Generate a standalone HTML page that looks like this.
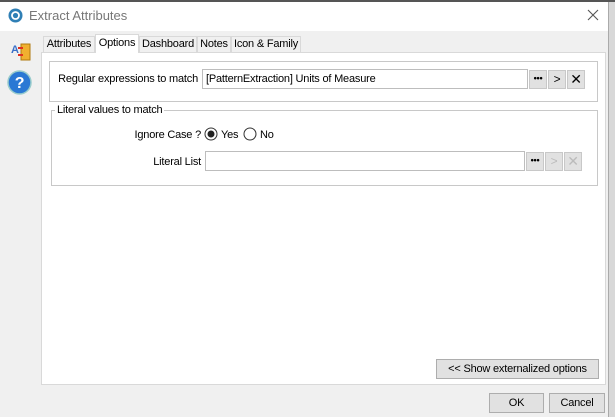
<!DOCTYPE html><html><head><style>
*{box-sizing:border-box;margin:0;padding:0}
body{width:615px;height:417px;position:relative;overflow:hidden;background:#d8d8d8;font-family:"Liberation Sans",sans-serif;font-size:11px;color:#000;white-space:nowrap;letter-spacing:-0.2px}
.a{position:absolute}
.win{left:0;top:2px;width:609px;height:415px;background:#f0f0f0;border-right:1px solid #aaa}
.title{left:0;top:2px;width:608px;height:29px;background:#fff}
.tab{position:absolute;top:36px;height:17px;background:#f0f0f0;border:1px solid #d9d9d9;border-bottom:none;text-align:center;line-height:15px;font-size:11px}
.btn{position:absolute;background:#e1e1e1;border:1px solid #adadad;text-align:center;font-size:11px}
.inp{position:absolute;background:#fff;border:1px solid #bdbdbd;font-size:11px;line-height:18px;padding-left:3px}
.sb{position:absolute;width:18px;height:19px;background:#e1e1e1;border:1px solid #c8c8c8;text-align:center;font-size:12px;line-height:16px}
.r{text-align:right}
</style></head><body>
<div class="a" style="left:0;top:0;width:615px;height:2px;background:#555"></div>
<div class="a win"></div>
<div class="a title"></div>
<svg class="a" style="left:8px;top:8px" width="15" height="15"><circle cx="7.5" cy="7.5" r="7" fill="#2f7fb5"/><circle cx="7.5" cy="7.5" r="3.5" fill="none" stroke="#fff" stroke-width="1.8"/></svg>
<div class="a" style="left:29px;top:8px;font-size:13px;color:#777;letter-spacing:0">Extract Attributes</div>
<svg class="a" style="left:587px;top:9px" width="12" height="12"><path d="M1 1L11 11M11 1L1 11" stroke="#555" stroke-width="1.1"/></svg>
<div class="a" style="left:11px;top:44px;font-size:11px;color:#3a6fc8;font-weight:bold">A</div>
<svg class="a" style="left:18px;top:43px" width="13" height="18"><rect x="3" y="1" width="9" height="16" fill="#f0b030" stroke="#b07a10"/><rect x="0" y="4" width="5" height="2" fill="#e03020"/><rect x="0" y="11" width="5" height="2" fill="#e03020"/></svg>
<svg class="a" style="left:7px;top:70px" width="25" height="25"><circle cx="12.5" cy="12.5" r="11.5" fill="#2a78d4" stroke="#9cc" stroke-width="1.5"/><text x="12.5" y="18" font-size="16" font-weight="bold" fill="#fff" text-anchor="middle" font-family="Liberation Sans">?</text></svg>
<div class="tab" style="left:43px;width:52px">Attributes</div>
<div class="tab" style="left:95px;width:44px;top:34px;height:19px;background:#fff;z-index:2;line-height:17px">Options</div>
<div class="tab" style="left:139px;width:58px">Dashboard</div>
<div class="tab" style="left:197px;width:34px">Notes</div>
<div class="tab" style="left:231px;width:70px">Icon &amp; Family</div>
<div class="a" style="left:41px;top:52px;width:565px;height:333px;background:#fff;border:1px solid #d9d9d9"></div>
<div class="a" style="left:49px;top:61px;width:549px;height:41px;border:1px solid #c8c8c8"></div>
<div class="a r" style="left:40px;top:73px;width:158px">Regular expressions to match</div>
<div class="inp" style="left:202px;top:69px;width:326px;height:20px">[PatternExtraction] Units of Measure</div>
<div class="sb" style="left:529px;top:70px;font-weight:bold;font-size:9px;line-height:14px">•••</div>
<div class="sb" style="left:548px;top:70px">&gt;</div>
<div class="sb" style="left:567px;top:70px;font-size:14px">✕</div>
<div class="a" style="left:51px;top:110px;width:547px;height:76px;border:1px solid #c8c8c8"></div>
<div class="a" style="left:55px;top:104px;background:#fff;padding:0 2px">Literal values to match</div>
<div class="a r" style="left:100px;top:129px;width:101px">Ignore Case ?</div>
<svg class="a" style="left:204px;top:127px" width="14" height="14"><circle cx="7" cy="7" r="6" fill="#fff" stroke="#333"/><circle cx="7" cy="7" r="3.5" fill="#222"/></svg>
<div class="a" style="left:221px;top:129px">Yes</div>
<svg class="a" style="left:243px;top:127px" width="14" height="14"><circle cx="7" cy="7" r="6" fill="#fff" stroke="#333"/></svg>
<div class="a" style="left:260px;top:129px">No</div>
<div class="a r" style="left:100px;top:156px;width:101px">Literal List</div>
<div class="inp" style="left:205px;top:151px;width:320px;height:20px"></div>
<div class="sb" style="left:526px;top:152px;font-weight:bold;font-size:9px;line-height:14px">•••</div>
<div class="sb" style="left:545px;top:152px;color:#bbb">&gt;</div>
<div class="sb" style="left:564px;top:152px;color:#bbb;font-size:14px">✕</div>
<div class="btn" style="left:436px;top:359px;width:163px;height:20px;line-height:18px">&lt;&lt; Show externalized options</div>
<div class="btn" style="left:489px;top:393px;width:55px;height:20px;line-height:18px">OK</div>
<div class="btn" style="left:549px;top:393px;width:56px;height:20px;line-height:18px">Cancel</div>
</body></html>
